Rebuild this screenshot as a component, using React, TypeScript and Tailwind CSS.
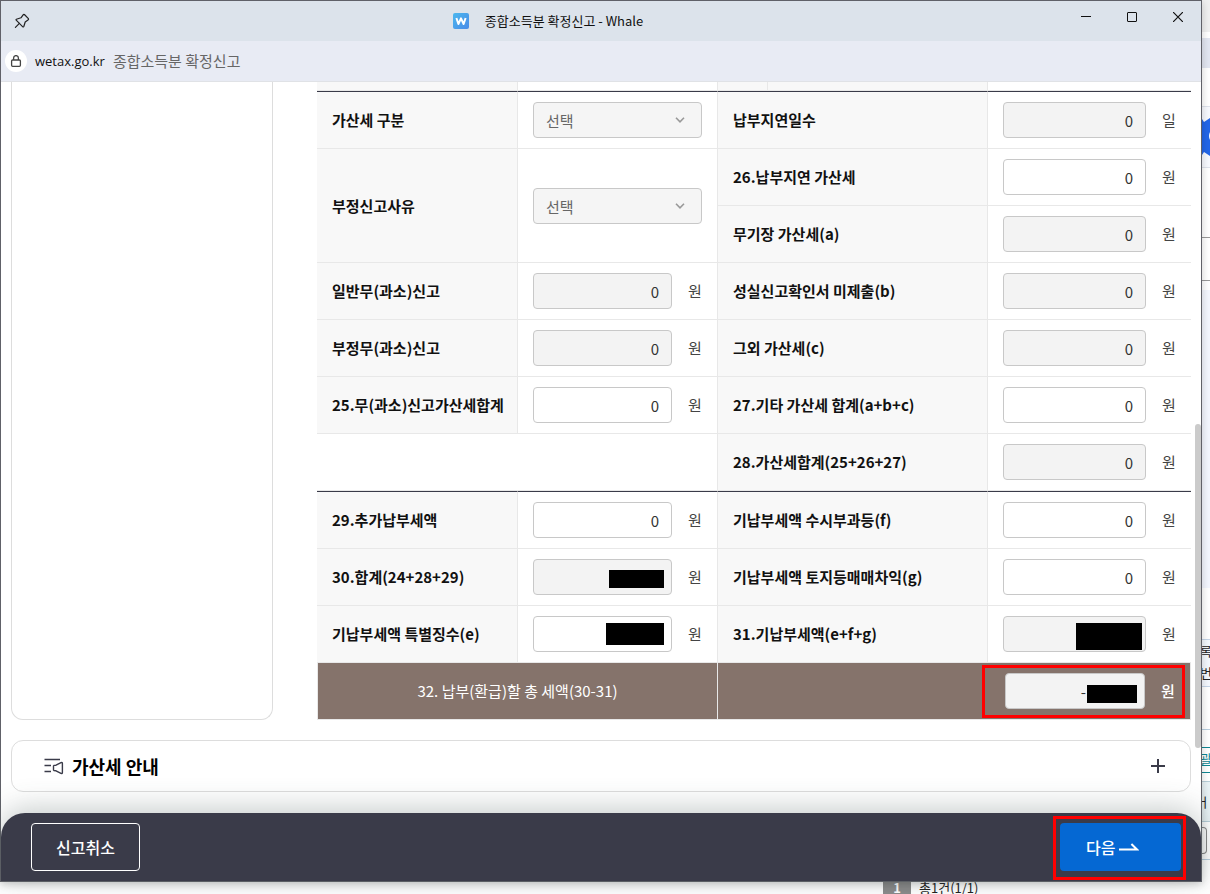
import React, { useState } from "react";

const thClass =
  "border-b border-r border-[#e8e8e8] bg-[#f8f8f8] px-[15px] text-left font-bold text-[#111]";
const tdClass = "border-b border-[#e8e8e8] px-[15px]";
const sectionTop = "h-[58px] border-t border-t-[#3a3b49]";

type HeadProps = {
  id: string;
  text: string;
  first?: boolean;
  rowSpan?: number;
};

function Head({ id, text, first, rowSpan }: HeadProps) {
  return (
    <th scope="row" rowSpan={rowSpan} className={`${thClass} ${first ? sectionTop : "h-[57px]"}`}>
      <label htmlFor={id} className="block whitespace-nowrap">
        {text}
      </label>
    </th>
  );
}

type MoneyProps = {
  id: string;
  unit?: string;
  locked?: boolean;
  first?: boolean;
  left?: boolean;
  mask?: string;
};

function Money({ id, unit = "원", locked, first, left, mask }: MoneyProps) {
  const [value, setValue] = useState(mask ? "" : "0");

  return (
    <td className={`${tdClass} ${left ? "border-r" : ""} ${first ? sectionTop : ""}`}>
      <div className="flex items-center gap-4">
        <div className="relative min-w-0 flex-1">
          <input
            id={id}
            type="text"
            value={value}
            readOnly={locked}
            onChange={(e) => setValue(e.target.value)}
            className={`block h-9 w-full rounded border border-[#c8c8c8] pr-3 text-right text-[#333] ${
              locked ? "bg-[#f3f3f3]" : "bg-white"
            }`}
          />
          {mask && <span className={`absolute bg-black ${mask}`} />}
        </div>
        <span className="w-[14px] whitespace-nowrap text-[#444]">{unit}</span>
      </div>
    </td>
  );
}

function Choice({ id, first, rowSpan }: { id: string; first?: boolean; rowSpan?: number }) {
  return (
    <td rowSpan={rowSpan} className={`${tdClass} border-r ${first ? sectionTop : ""}`}>
      <div className="relative">
        <select
          id={id}
          disabled
          className="block h-9 w-full appearance-none rounded border border-[#c8c8c8] bg-[#f5f5f5] pt-[2px] pl-3 text-[#666] opacity-100"
        >
          <option>선택</option>
        </select>
        <svg
          viewBox="0 0 10 6"
          className="absolute top-[15px] right-[17px] h-[6px] w-[10px]"
          fill="none"
          stroke="#999"
          strokeWidth="1.6"
        >
          <path d="M1 0.8 5 4.8 9 0.8" />
        </svg>
      </div>
    </td>
  );
}

function TitleBar() {
  return (
    <header className="flex h-10 items-center bg-[#dce3eb]">
      <button aria-label="고정" className="flex w-8 justify-end pr-[3px]">
        <svg viewBox="0 0 16 16" className="h-4 w-4" fill="none" stroke="#222" strokeWidth="1.2" strokeLinejoin="round" strokeLinecap="round">
          <path d="M10.4 1.5Q9.6 1.2 9.1 1.9L7 4.8 2.4 6.2Q1.6 6.6 2.2 7.2L8.8 13.8Q9.4 14.3 9.8 13.5L11.2 9 14 7Q14.9 6.4 14.4 5.6L10.4 1.5Z" />
          <path d="M5.4 10.4 1.4 14.4" />
        </svg>
      </button>
      <div className="flex flex-1 items-center justify-center gap-4 text-[13px] text-[#111]">
        <svg viewBox="0 0 16 16" className="h-4 w-4">
          <defs>
            <linearGradient id="whale" x1="0" y1="0" x2="1" y2="1">
              <stop offset="0" stopColor="#4cb8ee" />
              <stop offset="1" stopColor="#4a8be8" />
            </linearGradient>
          </defs>
          <rect width="16" height="16" rx="2" fill="url(#whale)" />
          <path d="M3.4 5 5.4 11 8 5.4 10.6 11 12.6 5" fill="none" stroke="#fff" strokeWidth="2" strokeLinejoin="round" />
        </svg>
        <h1>종합소득분 확정신고 - Whale</h1>
      </div>
      <div className="flex self-start">
        <button aria-label="최소화" className="flex h-8 w-[46px] items-center justify-center">
          <svg viewBox="0 0 10 10" className="h-[10px] w-[10px]" stroke="#111">
            <path d="M0 4.5H10" />
          </svg>
        </button>
        <button aria-label="최대화" className="flex h-8 w-[46px] items-center justify-center">
          <svg viewBox="0 0 10 10" className="h-[10px] w-[10px]" fill="none" stroke="#111">
            <rect x="0.5" y="0.5" width="9" height="9" rx="0.5" />
          </svg>
        </button>
        <button aria-label="닫기" className="flex h-8 w-[46px] items-center justify-center">
          <svg viewBox="0 0 10 10" className="h-[10px] w-[10px]" stroke="#111" strokeWidth="1.2">
            <path d="M0 0 10 10M10 0 0 10" />
          </svg>
        </button>
      </div>
    </header>
  );
}

function AddressBar() {
  return (
    <div className="flex h-[41px] items-center border-b border-[#e0e2e6] bg-[#e8ebf4] pl-1">
      <span className="flex h-[22px] w-[22px] items-center justify-center rounded-full bg-white">
        <svg viewBox="0 0 12 12" className="h-3 w-3" fill="none" stroke="#444" strokeWidth="1.3">
          <rect x="1.6" y="5" width="8.8" height="6.3" rx="1" />
          <path d="M3.6 5V3a2.4 2.4 0 0 1 4.8 0V5" />
        </svg>
      </span>
      <span className="ml-2 font-['Open_Sans','Noto_Sans',sans-serif] text-[13px] text-[#111]">wetax.go.kr</span>
      <span className="ml-2 text-[#666]">종합소득분 확정신고</span>
    </div>
  );
}

function TaxTable() {
  return (
    <table className="w-full table-fixed border-separate border-spacing-0">
      <colgroup>
        <col className="w-[201px]" />
        <col className="w-[200px]" />
        <col className="w-[270px]" />
        <col />
      </colgroup>
      <tbody>
        <tr>
          <td className="h-[9px] border-r border-b border-[#e8e8e8] bg-[#f8f8f8]"></td>
          <td className="border-r border-b border-[#e8e8e8]"></td>
          <td className="border-r border-b border-[#e8e8e8] bg-[#f8f8f8] p-0">
            <div className="h-2 w-[50px] border-r border-[#e8e8e8]"></div>
          </td>
          <td className="border-b border-[#e8e8e8]"></td>
        </tr>
        <tr>
          <Head id="penaltyType" text="가산세 구분" first />
          <Choice id="penaltyType" first />
          <Head id="delayDays" text="납부지연일수" first />
          <Money id="delayDays" unit="일" locked first />
        </tr>
        <tr>
          <Head id="falseReason" text="부정신고사유" rowSpan={2} />
          <Choice id="falseReason" rowSpan={2} />
          <Head id="delayPenalty" text="26.납부지연 가산세" />
          <Money id="delayPenalty" />
        </tr>
        <tr>
          <Head id="noBook" text="무기장 가산세(a)" />
          <Money id="noBook" locked />
        </tr>
        <tr>
          <Head id="normalReport" text="일반무(과소)신고" />
          <Money id="normalReport" locked left />
          <Head id="noConfirm" text="성실신고확인서 미제출(b)" />
          <Money id="noConfirm" locked />
        </tr>
        <tr>
          <Head id="falseReport" text="부정무(과소)신고" />
          <Money id="falseReport" locked left />
          <Head id="otherPenalty" text="그외 가산세(c)" />
          <Money id="otherPenalty" locked />
        </tr>
        <tr>
          <Head id="sum25" text="25.무(과소)신고가산세합계" />
          <Money id="sum25" left />
          <Head id="sum27" text="27.기타 가산세 합계(a+b+c)" />
          <Money id="sum27" />
        </tr>
        <tr>
          <td colSpan={2} className="border-r border-b border-[#e8e8e8]"></td>
          <Head id="sum28" text="28.가산세합계(25+26+27)" />
          <Money id="sum28" locked />
        </tr>
        <tr>
          <Head id="extraTax" text="29.추가납부세액" first />
          <Money id="extraTax" first left />
          <Head id="prepaidF" text="기납부세액 수시부과등(f)" first />
          <Money id="prepaidF" first />
        </tr>
        <tr>
          <Head id="sum30" text="30.합계(24+28+29)" />
          <Money id="sum30" locked left mask="top-[11px] right-2 h-[18px] w-[55px]" />
          <Head id="prepaidG" text="기납부세액 토지등매매차익(g)" />
          <Money id="prepaidG" />
        </tr>
        <tr>
          <Head id="prepaidE" text="기납부세액 특별징수(e)" />
          <Money id="prepaidE" left mask="top-[7px] right-2 h-[22px] w-[58px]" />
          <Head id="sum31" text="31.기납부세액(e+f+g)" />
          <Money id="sum31" locked mask="top-[7px] right-1 h-[27px] w-[66px]" />
        </tr>
        <tr className="bg-[#85736b] text-white">
          <th scope="row" colSpan={2} className="h-[57px] border-x border-b border-[#e8e8e8] font-normal">
            <label htmlFor="total">32. 납부(환급)할 총 세액(30-31)</label>
          </th>
          <td colSpan={2} className="relative border-r border-b border-[#e8e8e8] pr-[15px]">
            <div className="flex items-center justify-end gap-4">
              <div className="relative">
                <input
                  id="total"
                  type="text"
                  readOnly
                  value="-"
                  className="block h-9 w-[140px] rounded border border-[#c8c8c8] bg-[#f3f3f3] pr-[58px] text-right text-[#333]"
                />
                <span className="absolute top-3 right-2 h-[18px] w-[50px] bg-black" />
              </div>
              <span className="w-[14px] whitespace-nowrap font-medium">원</span>
            </div>
            <span className="pointer-events-none absolute top-[2px] right-[5px] h-[53px] w-[203px] border-3 border-[#f00]" />
          </td>
        </tr>
      </tbody>
    </table>
  );
}

function Footer() {
  return (
    <footer className="relative flex items-center justify-between rounded-t-[24px] bg-[#3a3b49] py-[10px] pr-5 pl-[30px] text-[16px] font-medium text-white shadow-[0_-4px_30px_rgba(60,80,75,0.3)]">
      <button className="h-12 w-[109px] rounded border border-white">신고취소</button>
      <div className="relative">
        <button className="flex h-12 w-[121px] items-center rounded bg-[#0568d3] pl-[26px]">
          다음
          <svg viewBox="0 0 20 10" className="ml-1 h-[10px] w-5" fill="none" stroke="#fff" strokeWidth="2">
            <path d="M0 7.5H18L12.4 2" />
          </svg>
        </button>
        <span className="pointer-events-none absolute -top-[7px] -right-[5px] -bottom-[9px] -left-[7px] border-3 border-[#f00]" />
      </div>
    </footer>
  );
}

// narrow strip of the page that is visible behind the popup
function BackPage() {
  return (
    <aside className="flex w-2 flex-col overflow-hidden bg-white text-[13px] leading-[22px] text-[#222]">
      <div className="h-8 bg-[#f0f0f0]"></div>
      <div className="mt-[6px] h-[30px] bg-[#e2e6f1]"></div>
      <div className="mt-[38px] h-[62px] border-y border-[#dfe3ec] bg-[#f7f9fe] pt-[10px]">
        <svg viewBox="0 0 8 40" className="h-10 w-2">
          <path d="M0 2 2 5 8 1V39L2 35 0 38Z" fill="#2366e8" />
          <path d="M8 15Q6 19 8 23Z" fill="#fff" />
        </svg>
      </div>
      <div className="mt-[69px] h-11 border-y border-[#999]"></div>
      <div className="mt-[9px] h-[298px] bg-[#f3f6fe]"></div>
      <div className="mt-[51px] flex h-12 flex-col items-center border-y border-[#c5d5e8] bg-[#f3f7fd]">
        <span>록</span>
        <span>번</span>
      </div>
      <div className="mt-[42px] border-t border-[#b8cfe0]"></div>
      <div className="mt-[17px] flex h-[26px] justify-center border-y border-[#0f8793] text-[#0f8793] underline">괄</div>
      <div className="mt-[8px] flex h-[41px] items-center justify-end border-y border-[#b8cfd8] bg-[#e8f2f5]">
        <span>ㅓ</span>
      </div>
      <div className="mt-[5px] h-[27px] w-[5px] rounded-r border border-l-0 border-[#888]"></div>
      <div className="mt-[5px] border-t border-[#b8cfe0]"></div>
    </aside>
  );
}

export default function App() {
  return (
    <div className="flex h-screen flex-col overflow-hidden bg-white font-['Noto_Sans_CJK_KR',sans-serif] text-[15px] leading-5">
      <div className="flex min-h-0 flex-1">
        <div className="relative z-10 flex min-w-0 flex-1 flex-col border border-[#606168] bg-white shadow-[0_2px_8px_rgba(0,0,0,0.2)]">
          <TitleBar />
          <AddressBar />
          <main className="relative min-h-0 flex-1 overflow-hidden px-[10px]">
            <div className="flex gap-11">
              <section className="w-[262px] shrink-0 rounded-b-xl border border-t-0 border-[#ddd]"></section>
              <div className="min-w-0 flex-1">
                <TaxTable />
              </div>
            </div>
            <section className="mt-5 flex h-[52px] items-center rounded-xl border border-[#ddd] pr-6 pl-8">
              <svg viewBox="0 0 20 18" className="h-[18px] w-5" fill="none" stroke="#3a3b49" strokeWidth="1.4">
                <path d="M0.5 2.5H16M0.5 8.5H7M0.5 14.5H7" />
                <path d="M9.5 8.8Q9.6 8.2 12 8.2L17 5.6Q18.4 5.2 18.4 6.6V15.4Q18.4 16.8 17 16.4L12 13.8Q9.6 13.8 9.5 13.2Z" strokeLinejoin="round" />
              </svg>
              <h2 className="ml-2 flex-1 text-[18px] font-bold text-black">가산세 안내</h2>
              <button aria-label="펼치기">
                <svg viewBox="0 0 16 16" className="h-4 w-4" stroke="#3a3b49" strokeWidth="2">
                  <path d="M1 8H15M8 1V15" />
                </svg>
              </button>
            </section>
            <div className="absolute top-[342px] right-0 h-[324px] w-[6px] rounded-full bg-[#cbcbcb]"></div>
          </main>
          <Footer />
        </div>
        <BackPage />
      </div>
      <div className="flex h-3 pl-[883px] text-[13px] leading-3 text-[#222]">
        <span className="w-7 bg-[#8b8b8b] text-center font-bold text-white">1</span>
        <span className="pl-2">총1건(1/1)</span>
      </div>
    </div>
  );
}
